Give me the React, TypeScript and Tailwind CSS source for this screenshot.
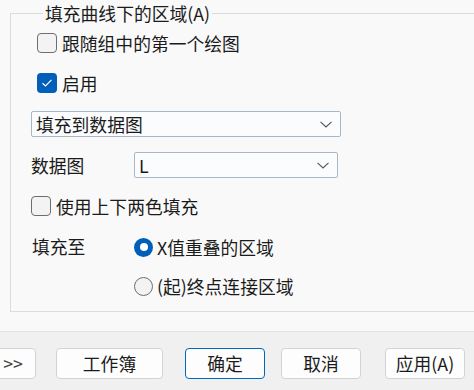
import React from "react";

const font = { fontFamily: '"Noto Sans CJK SC", "Noto Sans", sans-serif' };

function Chevron() {
  return (
    <svg width="12" height="7" viewBox="0 0 12 7" className="shrink-0">
      <path d="M0.5 0.8 L6 6 L11.5 0.8" fill="none" stroke="#555" strokeWidth="1.1" />
    </svg>
  );
}

function Checkbox({ checked, label, className = "" }: { checked?: boolean; label: string; className?: string }) {
  return (
    <div className={`flex h-[24px] items-center ${className}`}>
      {checked ? (
        <div className="flex h-[20px] w-[20px] items-center justify-center rounded-[4px] bg-[#005fb8]">
          <svg width="12" height="10" viewBox="0 0 12 10">
            <path d="M1.5 5.2 L4.5 8 L10.5 1.8" fill="none" stroke="#fff" strokeWidth="1.2" />
          </svg>
        </div>
      ) : (
        <div className="h-[20px] w-[20px] rounded-[4px] border border-[#6e6e6e] bg-[#f3f3f3]" />
      )}
      <span className="ml-[5px] text-[17.8px] leading-[24px] text-[#1b1b1b]">{label}</span>
    </div>
  );
}

function Radio({ checked, label }: { checked?: boolean; label: string }) {
  return (
    <div className="flex h-[24px] items-center">
      {checked ? (
        <div className="flex h-[19px] w-[19px] items-center justify-center rounded-full bg-[#005fb8]">
          <div className="h-[8px] w-[8px] rounded-full bg-white" />
        </div>
      ) : (
        <div className="h-[19px] w-[19px] rounded-full border border-[#6e6e6e] bg-[#f3f3f3]" />
      )}
      <span className="ml-[4px] text-[17.8px] leading-[24px] text-[#1b1b1b]">{label}</span>
    </div>
  );
}

function Combo({ value, className = "" }: { value: string; className?: string }) {
  return (
    <div
      className={`flex h-[26px] items-center justify-between rounded-[2px] border border-[#a9b7c5] bg-[#fbfcfd] pl-[4px] pr-[8px] ${className}`}
    >
      <span className="text-[17.8px] leading-[24px] text-[#1b1b1b]">{value}</span>
      <Chevron />
    </div>
  );
}

function Btn({ children, className = "", primary }: { children: React.ReactNode; className?: string; primary?: boolean }) {
  return (
    <div
      className={`flex h-[31px] items-center justify-center rounded-[4px] border bg-[#fdfdfd] text-[17.8px] text-[#1b1b1b] ${
        primary ? "border-[#0067c0]" : "border-[#d3d3d3]"
      } ${className}`}
    >
      {children}
    </div>
  );
}

export default function App() {
  return (
    <div className="flex h-[390px] w-[474px] flex-col overflow-hidden bg-[#f9f9f9]" style={font}>
      <div className="h-[331px] shrink-0 pl-[10px] pt-px">
        <fieldset className="h-[311px] border border-r-0 border-[#dcdcdc] pl-[20px]">
          <legend className="ml-[12px] px-[2px] text-[17.8px] leading-[24px] text-[#1b1b1b]">填充曲线下的区域(A)</legend>
          <div className="flex flex-col">
            <Checkbox label="跟随组中的第一个绘图" className="ml-[6px] mt-[6px]" />
            <Checkbox checked label="启用" className="ml-[6px] mt-[16px]" />
            <Combo value="填充到数据图" className="mt-[16px] w-[310px]" />
            <div className="mt-[15px] flex items-center">
              <span className="w-[103px] text-[17.8px] leading-[24px] text-[#1b1b1b]">数据图</span>
              <Combo value="L" className="w-[204px]" />
            </div>
            <Checkbox label="使用上下两色填充" className="mt-[16px]" />
            <div className="mt-[17px] flex items-start">
              <span className="ml-px w-[102px] text-[17.8px] leading-[22px] text-[#1b1b1b]">填充至</span>
              <Radio checked label="X值重叠的区域" />
            </div>
            <div className="ml-[103px] mt-[15px]">
              <Radio label="(起)终点连接区域" />
            </div>
          </div>
        </fieldset>
      </div>
      <div className="flex flex-1 items-start border-t border-[#e3e3e3] bg-[#f0f0f0] pt-[16px]">
        <Btn className="-ml-[10px] w-[46px] text-[#444]">&gt;&gt;</Btn>
        <Btn className="ml-[20px] w-[107px]">工作簿</Btn>
        <Btn primary className="ml-[22px] w-[80px]">确定</Btn>
        <Btn className="ml-[16px] w-[80px]">取消</Btn>
        <Btn className="ml-[24px] w-[80px]">应用(A)</Btn>
      </div>
    </div>
  );
}
